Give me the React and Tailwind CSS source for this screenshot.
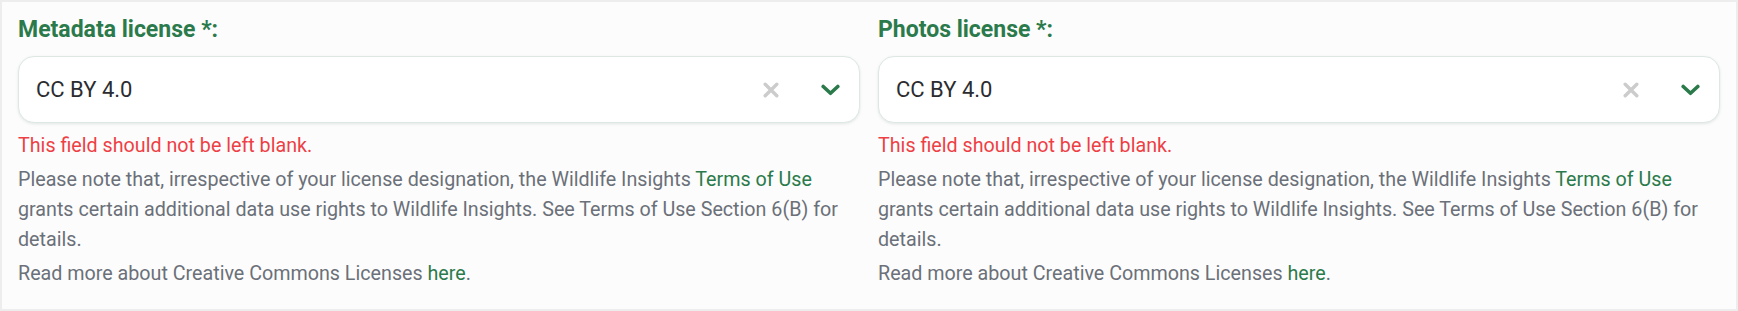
import React from "react";

const ClearIcon = () => (
  <svg width="16" height="16" viewBox="0 0 16 16" className="shrink-0">
    <path d="M2.2 2.2 L13.8 13.8 M13.8 2.2 L2.2 13.8" stroke="#cccccc" strokeWidth="3.4" strokeLinecap="round" />
  </svg>
);

const ChevronIcon = () => (
  <svg width="19" height="12" viewBox="0 0 19 12" className="shrink-0">
    <path d="M2.2 2.5 L9.5 9.3 L16.8 2.5" fill="none" stroke="#2b7a4b" strokeWidth="3.6" strokeLinecap="round" strokeLinejoin="round" />
  </svg>
);

const LicenseField = ({ label, value }) => (
  <div className="flex flex-col">
    <label className="text-[23px] leading-[28px] font-bold text-[#2b7a4b] mb-[12px]">{label}</label>

    {/* select box */}
    <div className="h-[67px] bg-white rounded-[16px] border border-[#dde8e3] shadow-[0_1px_3px_rgba(40,80,60,0.12)] flex items-center pl-[17px] pr-[19px]">
      <span className="flex-1 text-[22px] text-[#2b2c30]">{value}</span>
      <span className="mr-[42px] flex items-center">
        <ClearIcon />
      </span>
      <ChevronIcon />
    </div>

    <p className="mt-2 mb-1 text-[19.7px] leading-[30px] text-[#ee3f45]">This field should not be left blank.</p>
    <p className="mb-1 text-[19.7px] leading-[30px] text-[#6b7079]">
      Please note that, irrespective of your license designation, the Wildlife Insights{" "}
      <a className="text-[#2b7a4b]">Terms of Use</a> grants certain additional data use rights to Wildlife
      Insights. See Terms of Use Section 6(B) for details.
    </p>
    <p className="text-[19.7px] leading-[30px] text-[#6b7079]">
      Read more about Creative Commons Licenses <a className="text-[#2b7a4b]">here</a>.
    </p>
  </div>
);

export default function App() {
  return (
    <div className="w-[1738px] h-[311px] border-2 border-[#ededed] bg-[#fcfcfc] px-4 pt-[14px] font-['Roboto',sans-serif]">
      <div className="grid grid-cols-2 gap-[18px]">
        <LicenseField label="Metadata license *:" value="CC BY 4.0" />
        <LicenseField label="Photos license *:" value="CC BY 4.0" />
      </div>
    </div>
  );
}
